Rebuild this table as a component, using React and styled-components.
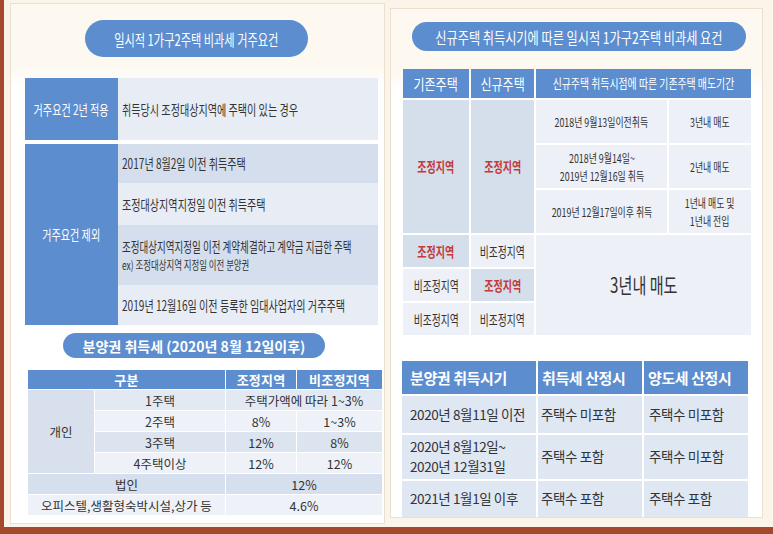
import React from 'react';
import styled, { createGlobalStyle } from 'styled-components';

const BLUE = '#5b8dcf';
const RED = '#c23a3a';
const INK = '#333333';

const Global = createGlobalStyle`
  html, body { margin: 0; padding: 0; background: #fbf4e9; }
  body { font-family: "Noto Sans CJK KR", "Noto Sans", sans-serif; color: ${INK}; }
  * { box-sizing: border-box; }
`;

const Frame = styled.div`
  width: 773px;
  height: 534px;
  background: #fbf4e9;
  border-left: 4px solid #a4492c;
  border-bottom: 7px solid #a4492c;
  padding: 3px 0 0 6px;
  display: flex;
  align-items: flex-start;
  gap: 5px;
  overflow: hidden;
`;

const Card = styled.section`
  width: ${p => p.$w}px;
  height: ${p => p.$h}px;
  margin-top: ${p => p.$top || 0}px;
  border: 1px solid #ebe0cf;
  background: linear-gradient(180deg, #fdf8f0 0px, #fdf8f0 62px, #ffffff 82px);
  display: flex;
  flex-direction: column;
  align-items: flex-start;
`;

const Pill = styled.div`
  width: ${p => p.$w}px;
  height: ${p => p.$h}px;
  margin: ${p => p.$top}px 0 0 ${p => p.$left}px;
  border-radius: 999px;
  background: ${BLUE};
  color: #fff;
  font-size: ${p => p.$size}px;
  font-weight: ${p => p.$bold ? 700 : 400};
  display: flex;
  align-items: center;
  justify-content: center;
  white-space: nowrap;
  line-height: 1;
`;

const Squeeze = styled.span`
  display: inline-block;
  white-space: nowrap;
  transform: scaleX(${p => p.$s ?? 0.72});
  transform-origin: ${p => p.$origin || 'center'};
  font-size: ${p => p.$size ? `${p.$size}px` : 'inherit'};
  font-weight: ${p => p.$bold ? 700 : 'inherit'};
  line-height: ${p => p.$lh || 1.3};
  text-align: ${p => p.$origin === 'left' ? 'left' : 'center'};
`;

/* ---------- left table 1 ---------- */
const ReqTable = styled.div`
  margin: 21px 0 0 14px;
  width: 353px;
  display: flex;
  flex-direction: column;
  gap: 4px;
`;

const ReqBlock = styled.div`
  display: grid;
  grid-template-columns: 93px 260px;
  grid-template-rows: ${p => p.$rows};
`;

const ReqLabel = styled.div`
  grid-row: 1 / -1;
  background: ${BLUE};
  color: #fff;
  font-size: 14px;
  display: flex;
  align-items: center;
  justify-content: center;
  min-width: 0;
`;

const ReqCell = styled.div`
  background: ${p => p.$dark ? '#d4deec' : '#e7ecf5'};
  font-size: 14px;
  color: ${INK};
  display: flex;
  flex-direction: column;
  justify-content: center;
  align-items: flex-start;
  padding-left: 4px;
  min-width: 0;
`;

/* ---------- left table 3 ---------- */
const TaxGrid = styled.div`
  margin: 12px 0 0 17px;
  display: grid;
  grid-template-columns: 66px 130px 70px 85px;
  grid-template-rows: 19px repeat(6, 20px);
  gap: 1px;
`;

const TaxHead = styled.div`
  grid-column: span ${p => p.$span || 1};
  background: ${BLUE};
  color: #fff;
  font-size: 13px;
  font-weight: 700;
  display: flex;
  align-items: center;
  justify-content: center;
  letter-spacing: 0.2px;
`;

const TAX_TONES = {
  group: '#d8e0ed',
  a: '#e3e9f3',
  b: '#eef2f8',
  c: '#dce4f0',
  d: '#d5dfed',
};

const TaxCell = styled.div`
  grid-column: span ${p => p.$span || 1};
  grid-row: span ${p => p.$rows || 1};
  background: ${p => TAX_TONES[p.$tone]};
  color: ${INK};
  font-size: 12.5px;
  display: flex;
  align-items: center;
  justify-content: center;
  white-space: nowrap;
`;

/* ---------- right table 1 ---------- */
const SaleGrid = styled.div`
  margin: 18px 0 0 12px;
  display: grid;
  grid-template-columns: 66px 63px 131px 82px;
  grid-template-rows: 29px 43px 43px 43px 32px 32px 32px;
  gap: 2px;
`;

const SaleHead = styled.div`
  grid-column: span ${p => p.$span || 1};
  background: ${BLUE};
  color: #fff;
  display: flex;
  align-items: center;
  justify-content: center;
  min-width: 0;
`;

const SaleCell = styled.div`
  grid-column: span ${p => p.$span || 1};
  grid-row: span ${p => p.$rows || 1};
  background: ${p => p.$dark ? '#d5deeb' : '#edf0f6'};
  color: ${p => p.$red ? RED : INK};
  display: flex;
  align-items: center;
  justify-content: center;
  text-align: center;
  min-width: 0;
`;

/* ---------- right table 2 ---------- */
const CountGrid = styled.div`
  margin: 26px 0 0 11px;
  display: grid;
  grid-template-columns: 134px 104px 104px;
  grid-template-rows: 33px 37px 44px 36px;
  gap: 2px;
`;

const CountHead = styled.div`
  background: ${BLUE};
  color: #fff;
  font-size: 15px;
  font-weight: 700;
  letter-spacing: -0.4px;
  display: flex;
  align-items: center;
  padding-left: ${p => p.$pad ?? 6}px;
  white-space: nowrap;
`;

const CountCell = styled.div`
  background: #dfe7f3;
  color: ${INK};
  font-size: 13.5px;
  letter-spacing: -0.4px;
  line-height: 1.45;
  display: flex;
  align-items: center;
  padding-left: ${p => p.$pad ?? 6}px;
  white-space: nowrap;
`;

const S = 0.72;

export default function App() {
  return (
    <>
      <Global />
      <Frame>
        <Card $w={375} $h={521}>
          <Pill $w={223} $h={37} $top={16} $left={74} $size={16}>
            <Squeeze $s={0.7} $lh={1}>일시적 1가구2주택 비과세 거주요건</Squeeze>
          </Pill>

          <ReqTable>
            <ReqBlock $rows="62px">
              <ReqLabel><Squeeze $s={S}>거주요건 2년 적용</Squeeze></ReqLabel>
              <ReqCell>
                <Squeeze $s={S} $origin="left">취득당시 조정대상지역에 주택이 있는 경우</Squeeze>
              </ReqCell>
            </ReqBlock>
            <ReqBlock $rows="39px 42px 60px 40px">
              <ReqLabel><Squeeze $s={S}>거주요건 제외</Squeeze></ReqLabel>
              <ReqCell $dark>
                <Squeeze $s={S} $origin="left">2017년 8월2일 이전 취득주택</Squeeze>
              </ReqCell>
              <ReqCell>
                <Squeeze $s={S} $origin="left">조정대상지역지정일 이전 취득주택</Squeeze>
              </ReqCell>
              <ReqCell $dark>
                <Squeeze $s={0.68} $origin="left" $lh={1.5}>조정대상지역지정일 이전 계약체결하고 계약금 지급한 주택</Squeeze>
                <Squeeze $s={0.7} $size={12} $origin="left" $lh={1.4}>ex) 조정대상지역 지정일 이전 분양권</Squeeze>
              </ReqCell>
              <ReqCell>
                <Squeeze $s={S} $origin="left">2019년 12월16일 이전 등록한 임대사업자의 거주주택</Squeeze>
              </ReqCell>
            </ReqBlock>
          </ReqTable>

          <Pill $w={262} $h={25} $top={8} $left={52} $size={14} $bold>
            분양권 취득세 (2020년 8월 12일이후)
          </Pill>

          <TaxGrid>
            <TaxHead $span={2}>구분</TaxHead>
            <TaxHead>조정지역</TaxHead>
            <TaxHead>비조정지역</TaxHead>

            <TaxCell $tone="group" $rows={4}>개인</TaxCell>
            <TaxCell $tone="a">1주택</TaxCell>
            <TaxCell $tone="a" $span={2}>주택가액에 따라 1~3%</TaxCell>

            <TaxCell $tone="b">2주택</TaxCell>
            <TaxCell $tone="b">8%</TaxCell>
            <TaxCell $tone="b">1~3%</TaxCell>

            <TaxCell $tone="c">3주택</TaxCell>
            <TaxCell $tone="c">12%</TaxCell>
            <TaxCell $tone="c">8%</TaxCell>

            <TaxCell $tone="b">4주택이상</TaxCell>
            <TaxCell $tone="b">12%</TaxCell>
            <TaxCell $tone="b">12%</TaxCell>

            <TaxCell $tone="d" $span={2}>법인</TaxCell>
            <TaxCell $tone="d" $span={2}>12%</TaxCell>

            <TaxCell $tone="b" $span={2}>오피스텔,생활형숙박시설,상가 등</TaxCell>
            <TaxCell $tone="b" $span={2}>4.6%</TaxCell>
          </TaxGrid>
        </Card>

        <Card $w={373} $h={510} $top={5}>
          <Pill $w={334} $h={30} $top={13} $left={21} $size={16}>
            <Squeeze $s={0.76} $lh={1}>신규주택 취득시기에 따른 일시적 1가구2주택 비과세 요건</Squeeze>
          </Pill>

          <SaleGrid>
            <SaleHead><Squeeze $size={15} $s={0.8}>기존주택</Squeeze></SaleHead>
            <SaleHead><Squeeze $size={15} $s={0.8}>신규주택</Squeeze></SaleHead>
            <SaleHead $span={2}><Squeeze $size={13} $s={0.76}>신규주택 취득시점에 따른 기존주택 매도기간</Squeeze></SaleHead>

            <SaleCell $dark $red $rows={3}><Squeeze $size={14} $s={S} $bold>조정지역</Squeeze></SaleCell>
            <SaleCell $dark $red $rows={3}><Squeeze $size={14} $s={S} $bold>조정지역</Squeeze></SaleCell>
            <SaleCell><Squeeze $size={12} $s={0.74}>2018년 9월13일이전취득</Squeeze></SaleCell>
            <SaleCell><Squeeze $size={12} $s={0.74}>3년내 매도</Squeeze></SaleCell>
            <SaleCell><Squeeze $size={12} $s={0.74} $lh={1.45}>2018년 9월14일~<br />2019년 12월16일 취득</Squeeze></SaleCell>
            <SaleCell><Squeeze $size={12} $s={0.74}>2년내 매도</Squeeze></SaleCell>
            <SaleCell><Squeeze $size={12} $s={0.74}>2019년 12월17일이후 취득</Squeeze></SaleCell>
            <SaleCell><Squeeze $size={12} $s={0.74} $lh={1.45}>1년내 매도 및<br />1년내 전입</Squeeze></SaleCell>

            <SaleCell $dark $red><Squeeze $size={14} $s={S} $bold>조정지역</Squeeze></SaleCell>
            <SaleCell><Squeeze $size={14} $s={0.7}>비조정지역</Squeeze></SaleCell>
            <SaleCell $span={2} $rows={3}><Squeeze $size={21} $s={0.72}>3년내 매도</Squeeze></SaleCell>
            <SaleCell><Squeeze $size={14} $s={0.7}>비조정지역</Squeeze></SaleCell>
            <SaleCell $dark $red><Squeeze $size={14} $s={S} $bold>조정지역</Squeeze></SaleCell>
            <SaleCell><Squeeze $size={14} $s={0.7}>비조정지역</Squeeze></SaleCell>
            <SaleCell><Squeeze $size={14} $s={0.7}>비조정지역</Squeeze></SaleCell>
          </SaleGrid>

          <CountGrid>
            <CountHead $pad={8}>분양권 취득시기</CountHead>
            <CountHead $pad={4}>취득세 산정시</CountHead>
            <CountHead $pad={4}>양도세 산정시</CountHead>

            <CountCell $pad={8}>2020년 8월11일 이전</CountCell>
            <CountCell $pad={3}>주택수 미포함</CountCell>
            <CountCell $pad={5}>주택수 미포함</CountCell>

            <CountCell $pad={8}>2020년 8월12일~<br />2020년 12월31일</CountCell>
            <CountCell $pad={3}>주택수 포함</CountCell>
            <CountCell $pad={5}>주택수 미포함</CountCell>

            <CountCell $pad={8}>2021년 1월1일 이후</CountCell>
            <CountCell $pad={3}>주택수 포함</CountCell>
            <CountCell $pad={5}>주택수 포함</CountCell>
          </CountGrid>
        </Card>
      </Frame>
    </>
  );
}
